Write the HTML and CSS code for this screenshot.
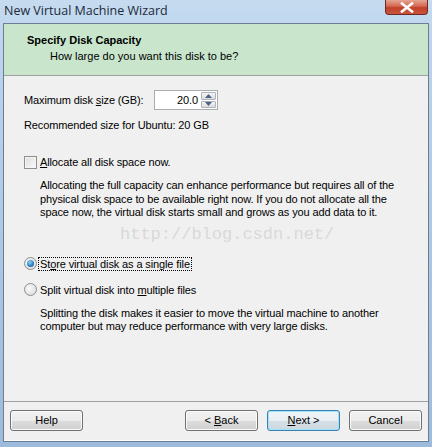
FILE: index.html
```html
<!DOCTYPE html>
<html>
<head>
<meta charset="utf-8">
<link rel="stylesheet" href="styles.css">
</head>
<body>
<div class="window">
  <div class="titlebar">
    <span class="title">New Virtual Machine Wizard</span>
    <span class="close"><svg width="16" height="11" viewBox="0 0 16 11"><path d="M3 1.5 L13 9.5 M13 1.5 L3 9.5" stroke="#fff" stroke-width="2.6" stroke-linecap="square"/></svg></span>
  </div>
  <div class="client">
    <div class="header">
      <div class="h-title">Specify Disk Capacity</div>
      <div class="h-sub">How large do you want this disk to be?</div>
    </div>
    <div class="body">
      <div class="row size-row">
        <span class="label">Maximum disk <u>s</u>ize (GB):</span>
        <span class="spin">
          <span class="spin-val">20.0</span>
          <span class="spin-btns">
            <span class="sb up"><svg width="7" height="4" viewBox="0 0 7 4"><path d="M0 4 L3.5 0 L7 4Z" fill="#4d6185"/></svg></span>
            <span class="sb down"><svg width="7" height="4" viewBox="0 0 7 4"><path d="M0 0 L3.5 4 L7 0Z" fill="#4d6185"/></svg></span>
          </span>
        </span>
      </div>
      <div class="rec">Recommended size for Ubuntu: 20 GB</div>
      <div class="check-row">
        <span class="checkbox"></span>
        <span><u>A</u>llocate all disk space now.</span>
      </div>
      <p class="desc desc1">Allocating the full capacity can enhance performance but requires all of the physical disk space to be available right now. If you do not allocate all the space now, the virtual disk starts small and grows as you add data to it.</p>
      <div class="watermark">http://blog.csdn.net/</div>
      <div class="radio-row r1">
        <span class="radio checked"><span class="dot"></span></span>
        <span class="focus">St<u>o</u>re virtual disk as a single file</span>
      </div>
      <div class="radio-row r2">
        <span class="radio"></span>
        <span>Split virtual disk into <u>m</u>ultiple files</span>
      </div>
      <p class="desc desc2">Splitting the disk makes it easier to move the virtual machine to another computer but may reduce performance with very large disks.</p>
    </div>
    <div class="footer">
      <button class="btn">Help</button>
      <span class="spacer"></span>
      <button class="btn">&lt; <u>B</u>ack</button>
      <button class="btn default"><u>N</u>ext &gt;</button>
      <button class="btn">Cancel</button>
    </div>
  </div>
</div>
</body>
</html>
```

FILE: styles.css
```css
html, body { margin: 0; padding: 0; }
body { width: 432px; height: 447px; overflow: hidden; font-family: "Liberation Sans", Arial, sans-serif; font-size: 11px; color: #000; }
.window {
  width: 432px; height: 447px; box-sizing: border-box;
  background: linear-gradient(180deg, #c6dbf0 0%, #bcd4ec 10%, #aac6e4 60%, #9dbbdc 100%);
  display: flex; flex-direction: column;
  padding: 0 3px 5px 3px;
}
.titlebar { height: 23px; display: flex; align-items: flex-start; justify-content: space-between; flex: none; }
.title { font-family: "Open Sans", "Liberation Sans", sans-serif; font-size: 12.5px; color: #1c2a3a; margin: 2px 0 0 1px; }
.close {
  width: 43px; height: 15px; margin-right: 1px;
  background: linear-gradient(180deg, #e6a594 0%, #d3664f 45%, #c2402a 55%, #c9563c 100%);
  border: 1px solid #6e2a22; border-top: none; border-radius: 0 0 4px 4px;
  display: flex; align-items: center; justify-content: center; box-sizing: border-box;
}
.client {
  flex: 1; background: #f0f0f0; border: 1px solid #6d7d8f;
  display: flex; flex-direction: column; position: relative;
}
.header { height: 52px; background: #c9e6cc; border-bottom: 1px solid #a0a0a0; box-sizing: border-box; flex: none; }
.h-title { font-weight: bold; font-size: 11px; margin: 10px 0 0 23px; }
.h-sub { margin: 4px 0 0 46px; }
.body { flex: 1; padding: 0 0 0 20px; position: relative; letter-spacing: -0.12px; }
.size-row { display: flex; align-items: center; margin-top: 14px; height: 20px; }
.label { width: 130px; }
.spin { display: flex; width: 64px; height: 20px; background: #fff; border: 1px solid #abadb3; box-sizing: border-box; }
.spin-val { flex: 1; text-align: right; padding-right: 3px; line-height: 18px; }
.spin-btns { width: 15px; display: flex; flex-direction: column; gap: 1px; padding: 1px 1px 1px 0; }
.sb { flex: 1; background: linear-gradient(#f4f4f4, #dcdcdc); border: 1px solid #aeb3ba; border-radius: 1px; display: flex; align-items: center; justify-content: center; }
.rec { margin-top: 9px; }
.check-row { display: flex; align-items: center; gap: 3px; margin-top: 24px; height: 14px; }
.checkbox { width: 13px; height: 13px; box-sizing: border-box; border: 1px solid #8e8f8f; background: linear-gradient(135deg, #dcdcdc, #fbfbfb); box-shadow: inset 0 0 0 1px #f4f4f4; }
.desc { margin: 0; line-height: 13.5px; }
.desc1 { margin: 10px 0 0 16px; width: 370px; }
.watermark { font-family: "Liberation Mono", "DejaVu Sans Mono", monospace; font-size: 17px; color: #d9d9d9; margin: 5px 0 0 96px; height: 22px; letter-spacing: 0; }
.radio-row { display: flex; align-items: center; gap: 3px; height: 16px; }
.r1 { margin-top: 9px; }
.r2 { margin-top: 10px; }
.radio { width: 13px; height: 13px; border-radius: 50%; box-sizing: border-box; border: 1px solid #8e8f8f; background: radial-gradient(circle at 40% 40%, #fafafa, #d6d6d6); display: flex; align-items: center; justify-content: center; }
.dot { width: 7px; height: 7px; border-radius: 50%; background: radial-gradient(circle at 40% 35%, #8fd1f5, #1a6fb8 70%, #0f4e8a); }
.focus { outline: 1px dotted #000; outline-offset: 0; padding: 0 1px; margin-left: -1px; }
.desc2 { margin: 9px 0 0 16px; width: 370px; }
.footer { flex: none; height: 36px; border-top: 1px solid #a0a0a0; box-shadow: 0 -1px 0 #fff inset; display: flex; align-items: center; padding: 0 6px 3px 6px; gap: 9px; }
.spacer { flex: 1; }
.btn {
  width: 73px; height: 21px; font-family: "Liberation Sans", Arial, sans-serif; font-size: 11px; color: #000;
  border: 1px solid #707070; border-radius: 3px;
  background: linear-gradient(180deg, #f2f2f2 0%, #ebebeb 50%, #dddddd 51%, #cfcfcf 100%);
  box-shadow: inset 0 0 0 1px #fbfbfb; padding: 0;
}
.btn.default { border-color: #3c7fb1; box-shadow: inset 0 0 0 1px #9fe3fb; background: linear-gradient(180deg, #f1f5f8 0%, #e8eef3 50%, #d8e0e6 51%, #cdd7df 100%); }
u { text-decoration: underline; text-underline-offset: 1px; }
```
